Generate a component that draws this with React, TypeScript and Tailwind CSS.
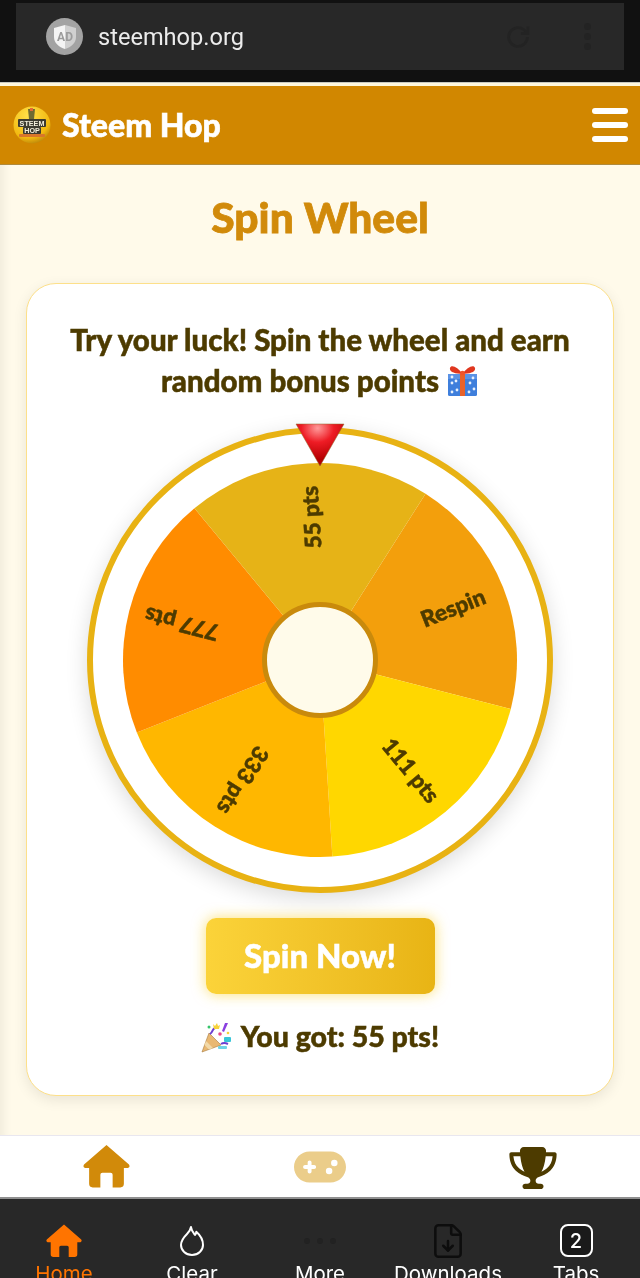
import React from "react";
import { FaGamepad, FaTrophy } from "react-icons/fa6";
import { FileDown } from "lucide-react";

const segments = [
  { label: "Respin", color: "#f39f0c", start: 32.4 },
  { label: "111 pts", color: "#ffd700", start: 104.4 },
  { label: "333 pts", color: "#ffb700", start: 176.4 },
  { label: "777 pts", color: "#ff8c00", start: 248.4 },
  { label: "55 pts", color: "#e6b317", start: 320.4 },
];

const C = 227;
const R = 197;

function polar(angle: number, radius: number) {
  const a = ((angle - 90) * Math.PI) / 180;
  return [C + radius * Math.cos(a), C + radius * Math.sin(a)];
}

function House({ className }: { className: string }) {
  return (
    <svg viewBox="0 0 46 42" className={className} fill="currentColor">
      <path d="M23 0L45 19q1.500 2.500-1 3.500H40V38q0 3.500-3.500 3.500H29V29q0-2-2-2H19q-2 0-2 2V41.500H9.500Q6 41.500 6 38V22.500H2q-2.500-1-1-3.500Z" />
    </svg>
  );
}

function Wheel() {
  return (
    <svg width={454} height={454} viewBox="0 0 454 454" className="block">
      {segments.map((s) => {
        const [x1, y1] = polar(s.start, R);
        const [x2, y2] = polar(s.start + 72, R);
        return <path key={s.label} d={`M${C} ${C}L${x1} ${y1}A${R} ${R} 0 0 1 ${x2} ${y2}Z`} fill={s.color} />;
      })}
      {segments.map((s) => {
        const mid = s.start + 36;
        return (
          <text
            key={s.label}
            transform={`translate(${C} ${C}) rotate(${mid - 90}) translate(143 0)`}
            textAnchor="middle"
            dominantBaseline="central"
            fill="#4d3b00"
            stroke="#4d3b00"
            strokeWidth={0.5}
            fontSize={22.5}
            fontWeight={900}
            fontFamily="Lato, sans-serif"
          >
            {s.label}
          </text>
        );
      })}
      <circle cx={C} cy={C} r={55.5} fill="#fffbea" stroke="#c98a0c" strokeWidth={5} />
    </svg>
  );
}

function Pointer() {
  return (
    <svg width={50} height={44} viewBox="0 0 50 44" className="absolute left-[202px] top-[-10px]">
      <defs>
        <radialGradient id="ptr" cx="0.45" cy="0.1" r="0.75">
          <stop offset="0" stopColor="#ff9a9a" />
          <stop offset="0.45" stopColor="#ee1c25" />
          <stop offset="1" stopColor="#b30000" />
        </radialGradient>
      </defs>
      <path d="M1 1H49L25 43Z" fill="url(#ptr)" stroke="#8f6a2c" strokeWidth={0.5} />
    </svg>
  );
}

function Logo() {
  return (
    <svg width={38} height={38} viewBox="0 0 38 38" className="shrink-0">
      <defs>
        <radialGradient id="lg" cx="0.4" cy="0.25" r="0.85">
          <stop offset="0" stopColor="#ffe14a" />
          <stop offset="0.7" stopColor="#f2b90f" />
          <stop offset="1" stopColor="#a87408" />
        </radialGradient>
      </defs>
      <circle cx={19} cy={19} r={18.500} fill="url(#lg)" />
      <path d="M15 3h7l-1 10h-5z" fill="#6e6a32" />
      <rect x={17} y={2} width={3} height={3} fill="#e2683a" />
      <rect x={5} y={13} width={28} height={8} rx={1} fill="#3c3a30" />
      <rect x={10} y={21} width={18} height={7} rx={1} fill="#3c3a30" />
      <rect x={6} y={28} width={26} height={3} rx={1} fill="#d9762a" />
      <text x={19} y={19.600} textAnchor="middle" fontSize={7.200} fontWeight={700} fill="#f3efdc" fontFamily="Liberation Sans, sans-serif">STEEM</text>
      <text x={19} y={27} textAnchor="middle" fontSize={7.200} fontWeight={700} fill="#f3efdc" fontFamily="Liberation Sans, sans-serif">HOP</text>
    </svg>
  );
}

function Gift() {
  return (
    <svg width={33} height={32} viewBox="0 0 33 32" className="inline-block align-[-5px] ml-[7px]">
      <rect x={2} y={9} width={29} height={22} rx={1.500} fill="#3f7fdc" />
      <rect x={2} y={9} width={29} height={5} fill="#5b93e6" />
      {[[6, 18], [11, 25], [6, 27], [24, 18], [28, 24], [23, 27], [10, 16], [27, 13], [6, 12]].map(([x, y]) => (
        <circle key={`${x}-${y}`} cx={x} cy={y} r={1.400} fill="#e8f1fc" />
      ))}
      <rect x={14} y={9} width={5} height={22} fill="#e8622a" />
      <path d="M16.500 9C12 2 5 -1 4 3s5 6 12.500 6zM16.500 9C21 2 28 -1 29 3s-5 6-12.500 6z" fill="#e0371f" />
      <circle cx={16.500} cy={8} r={2.200} fill="#f0542a" />
    </svg>
  );
}

function Popper() {
  return (
    <svg width={32} height={32} viewBox="0 0 32 32" className="inline-block align-[-6px] mr-[8px]">
      <path d="M1 31L8 12l12 12z" fill="#e9b872" stroke="#a87a3c" strokeWidth={0.600} />
      <path d="M5 20l7 7-4 1.500-4.500-4.500z" fill="#f2d9a8" />
      <path d="M9 13c3-2 2-5 5-6M20 23c3-2 5-1 7 0" stroke="#6d3fd0" strokeWidth={2} fill="none" />
      <path d="M24 2l3 0-4 9-2-1z" fill="#8a3fe0" />
      <path d="M12 3l2 2 2-3 1 3 2-1-1 4h-5z" fill="#f7d23a" />
      <rect x={23} y={16} width={7} height={5} rx={1} fill="#39c6d8" />
      <circle cx={8} cy={6} r={1.500} fill="#35c46a" />
      <circle cx={19} cy={13} r={1.800} fill="#e84a8a" />
      <circle cx={27} cy={12} r={1.300} fill="#f7d23a" />
      <rect x={17} y={25} width={9} height={3} rx={1} fill="#6fd3e6" />
    </svg>
  );
}

function BottomItem({ label, color, children }: { label: string; color: string; children: React.ReactNode }) {
  return (
    <div className="flex flex-col items-center">
      <div className="h-[43px] flex items-center justify-center">{children}</div>
      <span className={`font-['Inter',sans-serif] text-[20.500px] leading-[24px] whitespace-nowrap ${color}`}>{label}</span>
    </div>
  );
}

export default function App() {
  return (
    <div className="h-[1278px] w-[640px] overflow-hidden flex flex-col bg-[#fffaea] font-['Lato',sans-serif] blur-[0.4px]">
      {/* browser bar */}
      <div className="h-[82px] shrink-0 bg-[#111111] px-4 pt-[3px]">
        <div className="h-[67px] bg-[#282828] flex items-center pl-[30px] pr-[33px]">
          <div className="w-[37px] h-[37px] rounded-full bg-[#a3a3a3] flex items-center justify-center">
            <svg width={24} height={26} viewBox="0 0 24 26">
              <path d="M12 1l11 3v9c0 6-5 10-11 12z" fill="#d0d0d0" />
              <path d="M12 1L1 4v9c0 6 5 10 11 12z" fill="#f4f4f4" />
              <text x={12} y={17} textAnchor="middle" fontSize={12} fontWeight={700} fill="#9c9c9c" fontFamily="Roboto, sans-serif">AD</text>
            </svg>
          </div>
          <span className="ml-[15px] mt-[3px] font-['Roboto',sans-serif] text-[23.600px] text-[#ececec] leading-none">steemhop.org</span>
          <div className="ml-auto flex items-center gap-[52px]">
            <svg width={28} height={28} viewBox="0 0 24 24" fill="none" stroke="#232323" strokeWidth={2.400}>
              <path d="M20 12a8 8 0 1 1-2.500-5.800L20 8.500" />
              <path d="M20.500 3v6h-6" />
            </svg>
            <div className="flex flex-col gap-[3px]">
              <div className="w-[7px] h-[7px] rounded-full bg-[#232323]" />
              <div className="w-[7px] h-[7px] rounded-full bg-[#232323]" />
              <div className="w-[7px] h-[7px] rounded-full bg-[#232323]" />
            </div>
          </div>
        </div>
      </div>
      <div className="h-[4px] shrink-0 bg-[#fff7dc] border-t border-[#c9c9c0]" />

      {/* site header */}
      <header className="h-[79px] shrink-0 bg-[#d18700] border-b border-[#b08a3c] flex items-center pl-[13px] pr-[12px]">
        <Logo />
        <span className="ml-[11px] text-[32px] font-black text-white leading-none [-webkit-text-stroke:0.6px_currentColor]">Steem Hop</span>
        <div className="ml-auto flex flex-col gap-[8px]">
          <div className="w-[36px] h-[6px] rounded-full bg-white" />
          <div className="w-[36px] h-[6px] rounded-full bg-white" />
          <div className="w-[36px] h-[6px] rounded-full bg-white" />
        </div>
      </header>

      {/* content */}
      <main className="flex-1 min-h-0 shadow-[inset_12px_0_10px_-8px_rgba(0,0,0,0.06)]">
        <h1 className="pt-[29px] text-center text-[42.500px] leading-[46px] font-black text-[#d18a0a] [-webkit-text-stroke:0.8px_currentColor]">Spin Wheel</h1>
        <section className="mt-[43px] mx-[26px] h-[813px] rounded-[30px] bg-white border border-[#fde08a] shadow-[0_4px_14px_rgba(0,0,0,0.09)] pt-[35px] flex flex-col items-center">
          <p className="text-center text-[29.500px] leading-[41px] font-black text-[#4d3b00] whitespace-nowrap [-webkit-text-stroke:0.5px_currentColor]">
            Try your luck! Spin the wheel and earn
            <br />
            random bonus points
            <Gift />
          </p>
          <div className="relative mt-[26px] w-[466px] h-[466px] shrink-0 rounded-full border-[6px] border-[#e8b213] bg-white shadow-[0_6px_22px_rgba(0,0,0,0.14)]">
            <Wheel />
            <Pointer />
          </div>
          <button className="mt-[25px] w-[229px] h-[76px] shrink-0 rounded-[10px] bg-gradient-to-r from-[#fbd339] to-[#e8b414] shadow-[0_0_14px_rgba(250,204,21,0.6)] text-white text-[33px] font-black [-webkit-text-stroke:0.5px_currentColor]">
            Spin Now!
          </button>
          <p className="mt-[22px] text-[28.500px] leading-[40px] font-black text-[#4d3b00] whitespace-nowrap [-webkit-text-stroke:0.5px_currentColor]">
            <Popper />
            You got: 55 pts!
          </p>
        </section>
      </main>

      {/* site nav */}
      <nav className="h-[64px] shrink-0 bg-white border-t border-[#e9e7ef] border-b-2 border-b-[#8f8f8f] grid grid-cols-3 items-center">
        <div className="flex justify-center"><House className="w-[47px] h-[43px] text-[#d18a0a]" /></div>
        <div className="flex justify-center"><FaGamepad className="w-[52px] h-[42px] text-[#ebcd8a]" /></div>
        <div className="flex justify-center"><FaTrophy className="w-[48px] h-[42px] text-[#4d3b00] translate-y-[1px]" /></div>
      </nav>

      {/* browser bottom bar */}
      <div className="h-[79px] shrink-0 overflow-hidden bg-[#282828] grid grid-cols-5 pt-[20px]">
        <BottomItem label="Home" color="text-[#ff7400]">
          <House className="w-[36px] h-[36px] text-[#ff7400]" />
        </BottomItem>
        <BottomItem label="Clear" color="text-white">
          <svg width={24} height={32} viewBox="0 0 24 32" fill="none" stroke="#ffffff" strokeWidth={2} strokeLinejoin="round">
            <path d="M11 2c.5 4 2.500 6 4 8 .8-1 1.200-2 1.300-3.200C20 10 23 15 23 20c0 5.500-4.700 10-11 10S1 25.500 1 20c0-4.500 3-8 6-11 2-2 3.500-4 4-7z" />
          </svg>
        </BottomItem>
        <BottomItem label="More" color="text-white">
          <div className="flex gap-[7px]">
            <div className="w-[6px] h-[6px] rounded-full bg-[#222222]" />
            <div className="w-[6px] h-[6px] rounded-full bg-[#222222]" />
            <div className="w-[6px] h-[6px] rounded-full bg-[#222222]" />
          </div>
        </BottomItem>
        <BottomItem label="Downloads" color="text-white">
          <FileDown className="w-[38px] h-[42px] text-[#0d0d0d]" strokeWidth={1.600} />
        </BottomItem>
        <BottomItem label="Tabs" color="text-white">
          <div className="w-[33px] h-[33px] rounded-[8px] border-2 border-white bg-[#1a1a1a] flex items-center justify-center text-white text-[20px] font-['Inter',sans-serif] font-medium leading-none">2</div>
        </BottomItem>
      </div>
    </div>
  );
}
